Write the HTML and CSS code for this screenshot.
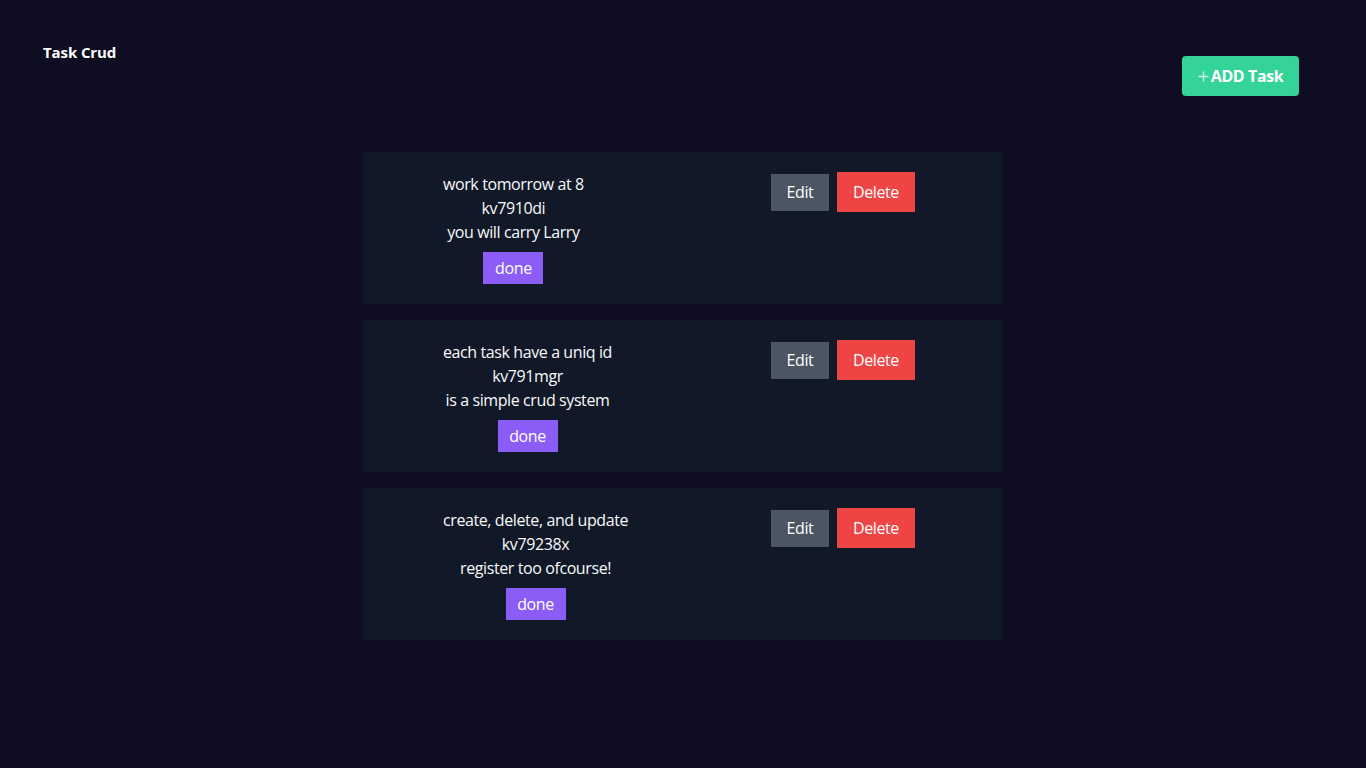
FILE: index.html
```html
<!DOCTYPE html>
<html>
<head>
<meta charset="utf-8">
<link rel="stylesheet" href="styles.css">
</head>
<body>
<header class="header">
  <h1 class="brand">Task Crud</h1>
  <button class="add-btn"><svg class="plus" width="11" height="11" viewBox="0 0 11 11"><path d="M5.5 0.5v10M0.5 5.5h10" stroke="currentColor" stroke-width="1.4" fill="none"/></svg>ADD Task</button>
</header>
<main class="list">
  <div class="card">
    <div class="info">
      <p>work tomorrow at 8</p>
      <p>kv7910di</p>
      <p>you will carry Larry</p>
      <button class="done">done</button>
    </div>
    <div class="actions">
      <button class="edit">Edit</button>
      <button class="delete">Delete</button>
    </div>
  </div>
  <div class="card">
    <div class="info">
      <p>each task have a uniq id</p>
      <p>kv791mgr</p>
      <p>is a simple crud system</p>
      <button class="done">done</button>
    </div>
    <div class="actions">
      <button class="edit">Edit</button>
      <button class="delete">Delete</button>
    </div>
  </div>
  <div class="card">
    <div class="info">
      <p>create, delete, and update</p>
      <p>kv79238x</p>
      <p>register too ofcourse!</p>
      <button class="done">done</button>
    </div>
    <div class="actions">
      <button class="edit">Edit</button>
      <button class="delete">Delete</button>
    </div>
  </div>
</main>
</body>
</html>
```
FILE: styles.css
```css
* { box-sizing: border-box; }
html, body { margin: 0; padding: 0; }
body {
  background: #0f0d21;
  color: #f9fafb;
  font-family: "Open Sans", "Noto Sans", sans-serif;
  font-size: 16px;
  letter-spacing: -0.4px;
  height: 768px;
}
button { font-family: inherit; letter-spacing: inherit; border: 0; cursor: pointer; }
.header {
  display: flex;
  justify-content: space-between;
  align-items: flex-start;
  padding: 42px 67px 0 43px;
}
.brand {
  margin: 0;
  font-size: 15px;
  font-weight: 700;
  line-height: 20px;
  letter-spacing: -0.1px;
  color: #fff;
}
.add-btn {
  margin-top: 14px;
  width: 117px;
  height: 40px;
  border-radius: 4px;
  background: #34d399;
  color: #fff;
  font-size: 16px;
  font-weight: 700;
  display: flex;
  align-items: center;
  justify-content: center;
  gap: 2px;
}
.plus { color: rgba(255, 255, 255, 0.75); margin-top: 1px; }
.list {
  width: 640px;
  margin: 56px auto 0;
  display: flex;
  flex-direction: column;
  gap: 16px;
}
.card {
  background: #111827;
  height: 152px;
  padding: 20px 0 0 80px;
  display: grid;
  grid-template-columns: 328px auto;
  align-items: start;
}
.info {
  justify-self: start;
  display: flex;
  flex-direction: column;
  align-items: center;
  text-align: center;
}
.info p { margin: 0; line-height: 24px; }
.done {
  margin-top: 8px;
  width: 60px;
  height: 32px;
  background: #8b5cf6;
  color: #fff;
  font-size: 16px;
}
.actions {
  display: flex;
  align-items: center;
  gap: 8px;
}
.edit, .delete { color: #fff; font-size: 16px; padding: 0; }
.edit { background: #4b5563; height: 37px; width: 58px; }
.delete { background: #ef4444; height: 40px; width: 78px; }
```
